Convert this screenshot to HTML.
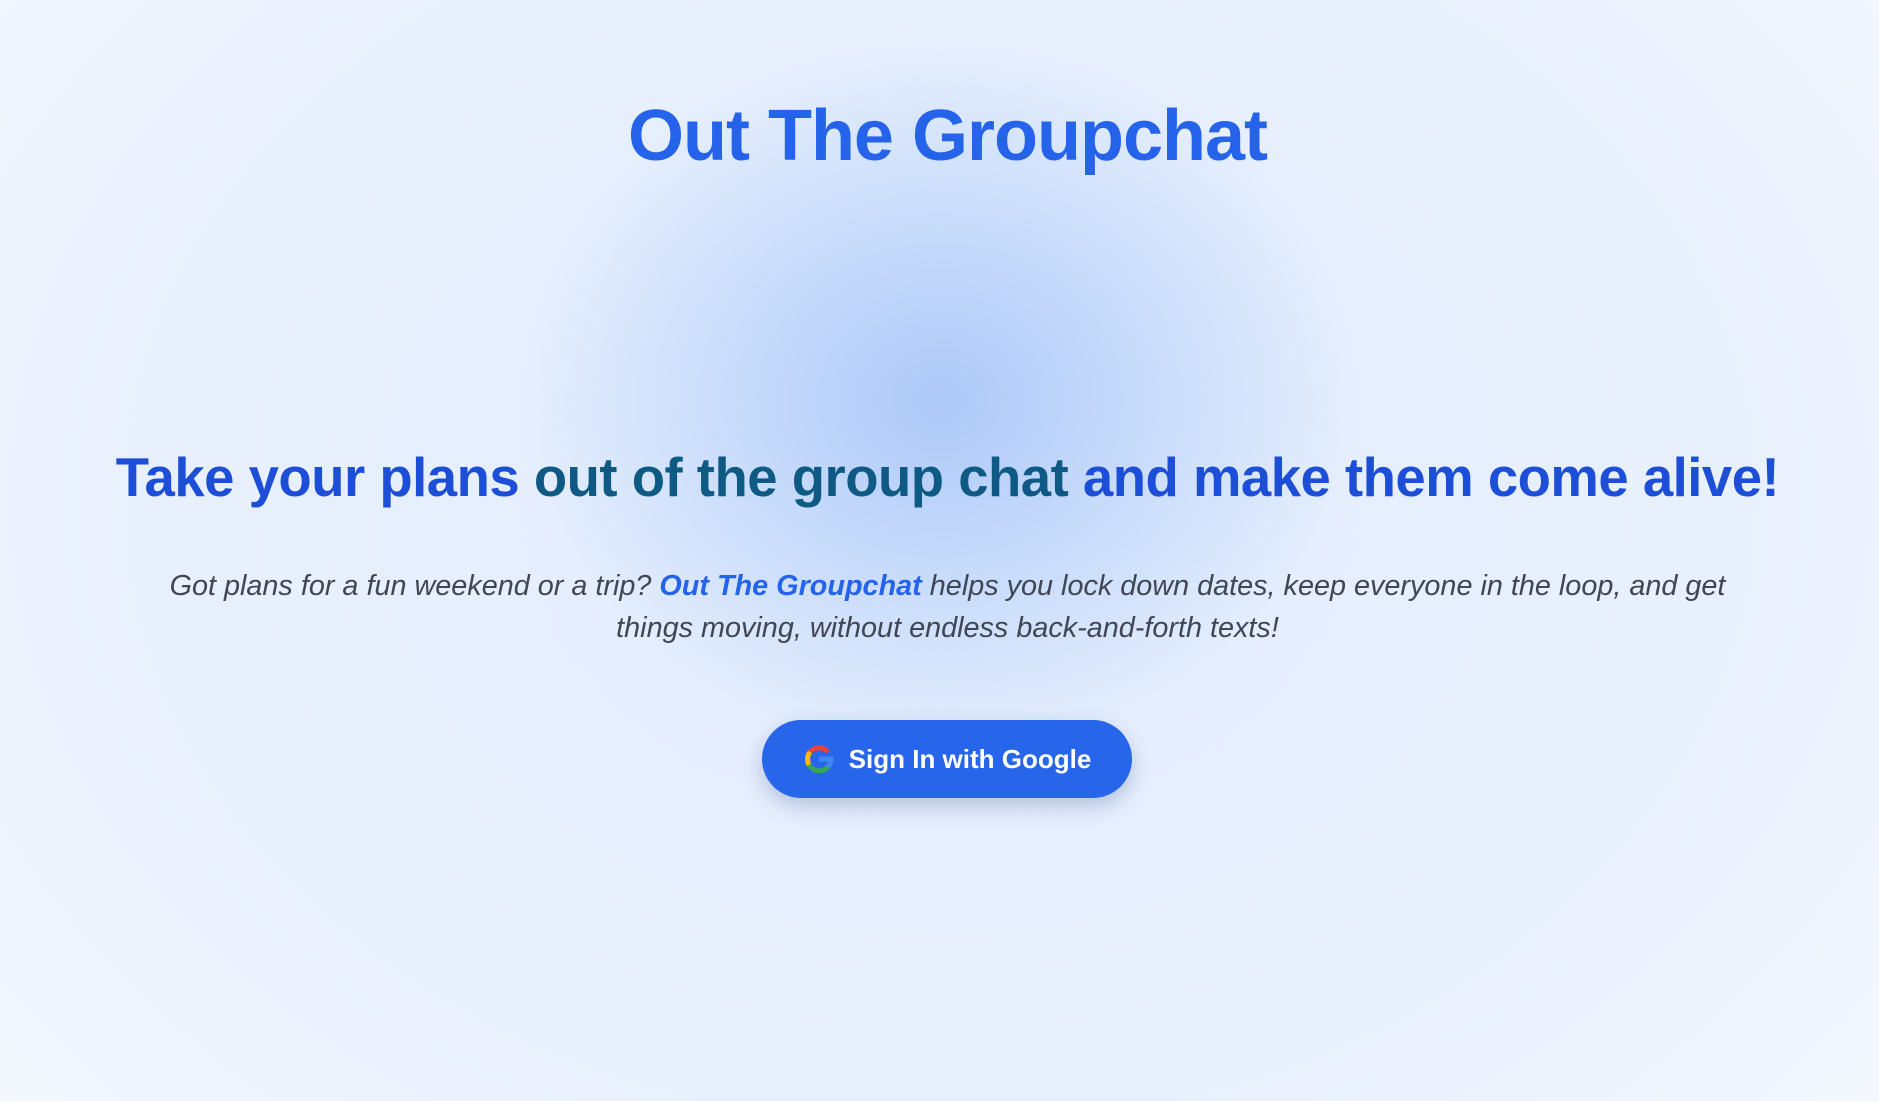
<!DOCTYPE html>
<html><head><style>
html,body{margin:0;height:100%;}
body{width:1879px;height:1101px;overflow:hidden;position:relative;font-family:"Liberation Sans",sans-serif;
background:radial-gradient(ellipse 420px 360px at 940px 400px,#adc9f8 0%,#c6dafb 45%,rgba(220,233,253,0) 100%),radial-gradient(ellipse 1300px 1000px at 940px 500px,#e3edfd 0%,#e8f0fd 60%,#f6f9fe 100%);}
h1,h2,p{left:8px!important;}
h1{position:absolute;top:95px;left:0;width:100%;text-align:center;margin:0;font-size:72px;font-weight:bold;color:#2563eb;letter-spacing:-1px;}
h2{position:absolute;top:446px;left:0;width:100%;text-align:center;margin:0;font-size:54.5px;font-weight:bold;color:#1d4ed8;letter-spacing:-0.5px;}
h2 span{color:#0f5a84}
p{position:absolute;top:565px;left:0;width:100%;text-align:center;margin:0;font-size:28.8px;font-style:italic;color:#3f4654;line-height:42px;}
p b{color:#2563eb}
.btn{position:absolute;left:762px;top:720px;width:370px;height:78px;border-radius:39px;background:#2766ea;box-shadow:0 8px 20px rgba(60,90,150,.3);color:#fff;font-weight:bold;font-size:26px;display:flex;align-items:center;justify-content:center;gap:14px;}
</style></head><body>
<h1>Out The Groupchat</h1>
<h2>Take your plans <span>out of the group chat</span> and make them come alive!</h2>
<p>Got plans for a fun weekend or a trip? <b>Out The Groupchat</b> helps you lock down dates, keep everyone in the loop, and get<br>things moving, without endless back-and-forth texts!</p>
<div class="btn"><svg width="32" height="32" viewBox="0 0 32 32" fill="none" stroke-width="5">
<path d="M25 9 A12 12 0 0 0 7 9" stroke="#ea4335"/>
<path d="M7 9 A12 12 0 0 0 6 22" stroke="#fbbc05"/>
<path d="M6 22 A12 12 0 0 0 25 24" stroke="#34a853"/>
<path d="M25 24 A12 12 0 0 0 28 16 H16" stroke="#4285f4"/>
</svg>Sign In with Google</div>
</body></html>
